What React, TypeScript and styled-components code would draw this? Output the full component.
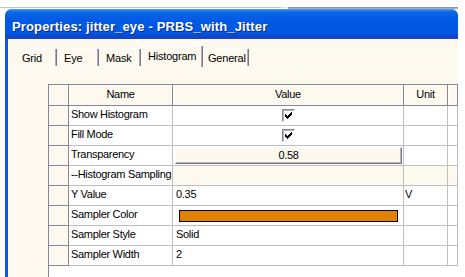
import React from "react";
import styled, { createGlobalStyle } from "styled-components";

const GlobalStyle = createGlobalStyle`
  html, body { margin: 0; padding: 0; background: #ffffff; }
  body { font-family: "Liberation Sans", Arial, sans-serif; }
  #root { width: 465px; height: 277px; overflow: hidden; }
`;

const CREAM = "#fdf9ef";
const DARK = "#8c8494";
const LIGHT = "#c0c0c0";

const Page = styled.div`
  width: 465px;
  height: 277px;
  overflow: hidden;
  background: #fff;
  display: flex;
  flex-direction: column;
`;

const BackEdge = styled.div`
  flex: none;
  width: 458px;
  height: 9px;
  box-sizing: border-box;
  padding-top: 7px;
  display: flex;
  align-items: flex-start;
`;

const EdgeSeg = styled.div<{ $w?: number; $tone: "light" | "gap" | "dark" }>`
  ${(p) => (p.$w ? `flex: 0 0 ${p.$w}px;` : "flex: 1;")}
  height: ${(p) => (p.$tone === "dark" ? 2 : 1)}px;
  background: ${(p) =>
    p.$tone === "dark"
      ? "linear-gradient(#8a8296, #b9b5c0)"
      : p.$tone === "gap"
      ? "#e6e6e6"
      : "#c4c4c4"};
`;

const Window = styled.div`
  flex: 1;
  min-height: 0;
  width: 453px;
  margin-left: 5px;
  display: flex;
  flex-direction: column;
  background: #0a58dc;
  border-radius: 7px 7px 0 0;
  overflow: hidden;
`;

const TitleBar = styled.div`
  flex: none;
  height: 30px;
  box-sizing: border-box;
  padding: 10px 0 0 7px;
  background: linear-gradient(
    to bottom,
    #4aa6f0 0px,
    #2e8cf2 1px,
    #0c66e4 3px,
    #0059e4 12px,
    #0056e0 25px,
    #0a48d2 26px,
    #1a44c4 30px
  );
`;

const Title = styled.div`
  color: #ffffff;
  font-family: "Liberation Sans", Arial, sans-serif;
  font-weight: bold;
  font-size: 13px;
  line-height: 15px;
  letter-spacing: 0.15px;
  white-space: nowrap;
  text-shadow: 1px 1px 0 #0b2c8c;
`;

const Body = styled.div`
  flex: 1;
  min-height: 0;
  margin-left: 3px;
  background: ${CREAM};
  display: flex;
  flex-direction: column;
  padding: 6px 0 0 6px;
`;

const TabRow = styled.div`
  flex: none;
  height: 21px;
  display: flex;
  align-items: flex-end;
`;

const Tab = styled.div<{ $w: number; $pad: number; $active?: boolean }>`
  flex: 0 0 ${(p) => p.$w}px;
  box-sizing: border-box;
  height: ${(p) => (p.$active ? 22 : 18)}px;
  margin-bottom: ${(p) => (p.$active ? -1 : 0)}px;
  padding: ${(p) => (p.$active ? 4 : 3)}px 0 0 ${(p) => p.$pad}px;
  border-top: 1px solid #ffffff;
  background: ${CREAM};
  box-shadow: inset -1px 0 0 #7b7588, inset -2px 0 0 #b3aebb
    ${(p) => (p.$active ? ", inset 1px 0 0 #ffffff" : "")};
  font-size: 11px;
  line-height: 13px;
  letter-spacing: -0.2px;
  color: #000;
  white-space: nowrap;
  position: relative;
  z-index: ${(p) => (p.$active ? 2 : 1)};
`;

const Panel = styled.div`
  flex: 1;
  min-height: 0;
  display: flex;
  flex-direction: column;
  border-top: 1px solid #ffffff;
  border-left: 1px solid #ffffff;
  padding: 17px 0 0 33px;
`;

const Grid = styled.div`
  flex: 1;
  display: grid;
  grid-template-columns: 20px 104px 231px 44px 1fr;
  grid-template-rows: 21px repeat(8, 20px);
  align-content: start;
  border-top: 1px solid ${DARK};
  border-left: 1px solid ${DARK};
  background: #ffffff;
  font-size: 11px;
  line-height: 13px;
  letter-spacing: -0.3px;
  color: #000;
`;

const HeadCell = styled.div`
  box-sizing: border-box;
  background: ${CREAM};
  border-right: 1px solid ${DARK};
  border-bottom: 1px solid ${DARK};
  box-shadow: inset 1px 1px 0 #ffffff;
  display: flex;
  align-items: center;
  justify-content: center;
  padding-bottom: 2px;
  white-space: nowrap;
`;

const Cell = styled.div<{ $cream?: boolean; $pad?: number; $center?: boolean }>`
  box-sizing: border-box;
  min-width: 0;
  background: ${(p) => (p.$cream ? CREAM : "#ffffff")};
  border-right: 1px solid ${LIGHT};
  border-bottom: 1px solid ${LIGHT};
  display: flex;
  align-items: center;
  justify-content: ${(p) => (p.$center ? "center" : "flex-start")};
  padding: 0 0 2px ${(p) => p.$pad ?? 0}px;
  white-space: nowrap;
  overflow: hidden;
`;

const ButtonCell = styled(Cell)`
  padding: 1px 1px 1px 2px;
  align-items: stretch;
`;

const ValueButton = styled.div`
  flex: 1;
  box-sizing: border-box;
  background: ${CREAM};
  border-top: 1px solid #ffffff;
  border-left: 1px solid #ffffff;
  border-right: 1px solid #7e7789;
  border-bottom: 1px solid #7e7789;
  box-shadow: inset -1px -1px 0 #b8b3be;
  display: flex;
  align-items: center;
  justify-content: center;
  padding-bottom: 1px;
`;

const CheckBox = styled.span`
  width: 13px;
  height: 13px;
  box-sizing: border-box;
  margin-top: 2px;
  border: 1px solid;
  border-color: #8a8591 #ffffff #ffffff #8a8591;
  box-shadow: inset 1px 1px 0 #b9b4c0;
  background: #ffffff;
  display: flex;
  align-items: center;
  justify-content: center;
`;

const ColorBar = styled.div<{ $color: string }>`
  flex: 0 0 219px;
  height: 12px;
  margin-left: 3px;
  margin-top: 2px;
  box-sizing: border-box;
  border: 1px solid #000;
  background: ${(p) => p.$color};
`;

const Check = () => (
  <CheckBox>
    <svg width="7" height="7" viewBox="0 0 7 7">
      <path d="M0 2h1v1h1v1h1v-1h1v-1h1v-1h1v-1h1v3h-1v1h-1v1h-1v1h-1v1h-1v-1h-1v-1h-1z" fill="#000" />
    </svg>
  </CheckBox>
);

type Row = {
  name: string;
  kind: "check" | "button" | "text" | "color" | "group";
  value?: string;
  unit?: string;
};

const rows: Row[] = [
  { name: "Show Histogram", kind: "check" },
  { name: "Fill Mode", kind: "check" },
  { name: "Transparency", kind: "button", value: "0.58" },
  { name: "--Histogram Sampling", kind: "group" },
  { name: "Y Value", kind: "text", value: "0.35", unit: "V" },
  { name: "Sampler Color", kind: "color", value: "#e38100" },
  { name: "Sampler Style", kind: "text", value: "Solid" },
  { name: "Sampler Width", kind: "text", value: "2" },
];

const tabs = [
  { label: "Grid", w: 43, pad: 8 },
  { label: "Eye", w: 42, pad: 7 },
  { label: "Mask", w: 42, pad: 7 },
  { label: "Histogram", w: 62, pad: 7, active: true },
  { label: "General", w: 46, pad: 5 },
];

function ValueCell({ row }: { row: Row }) {
  switch (row.kind) {
    case "check":
      return (
        <Cell $center>
          <Check />
        </Cell>
      );
    case "button":
      return (
        <ButtonCell>
          <ValueButton>{row.value}</ValueButton>
        </ButtonCell>
      );
    case "color":
      return (
        <Cell $pad={3}>
          <ColorBar $color={row.value!} />
        </Cell>
      );
    case "group":
      return <Cell $cream />;
    default:
      return <Cell $pad={3}>{row.value}</Cell>;
  }
}

export default function App() {
  return (
    <Page>
      <GlobalStyle />
      <BackEdge>
        <EdgeSeg $w={281} $tone="light" />
        <EdgeSeg $w={7} $tone="gap" />
        <EdgeSeg $tone="dark" />
      </BackEdge>
      <Window>
        <TitleBar>
          <Title>Properties: jitter_eye - PRBS_with_Jitter</Title>
        </TitleBar>
        <Body>
          <TabRow>
            {tabs.map((t) => (
              <Tab key={t.label} $w={t.w} $pad={t.pad} $active={t.active}>
                {t.label}
              </Tab>
            ))}
          </TabRow>
          <Panel>
            <Grid>
              <HeadCell />
              <HeadCell>Name</HeadCell>
              <HeadCell>Value</HeadCell>
              <HeadCell>Unit</HeadCell>
              <HeadCell />
              {rows.map((r) => (
                <React.Fragment key={r.name}>
                  <HeadCell />
                  <Cell $pad={2}>{r.name}</Cell>
                  <ValueCell row={r} />
                  <Cell $pad={1} $cream={r.kind === "group"}>
                    {r.unit ?? ""}
                  </Cell>
                  <Cell $cream={r.kind === "group"} />
                </React.Fragment>
              ))}
            </Grid>
          </Panel>
        </Body>
      </Window>
    </Page>
  );
}
